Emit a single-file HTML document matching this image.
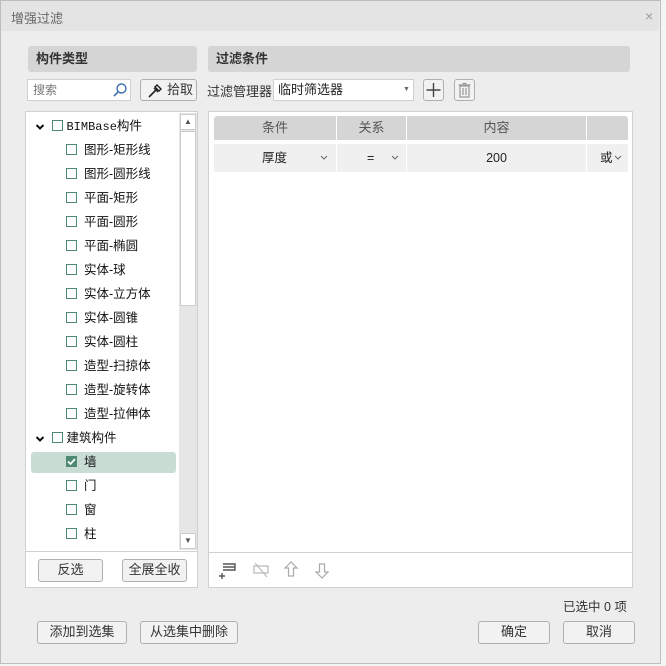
<!DOCTYPE html>
<html><head><meta charset="utf-8"><style>
*{box-sizing:border-box;margin:0;padding:0}
body{width:666px;height:666px;background:#f4f4f4;font-family:"Liberation Sans","Noto Sans CJK SC",sans-serif;font-size:12px;color:#222;position:relative;overflow:hidden}
.a{position:absolute}
.win{left:0;top:0;width:661px;height:664px;border:1px solid #bdbdbd;background:#ededed}
.title{left:1px;top:1px;width:658px;height:30px;background:#e4e4e4;color:#666;font-size:13px;padding:7px 0 0 10px}
.hdr{background:#d5d5d5;border-radius:3px;font-weight:bold;font-size:13px;color:#333;padding:0 0 0 8px;height:26px;line-height:26px}
.box{background:#fff;border:1px solid #d0d0d0}
.btn{background:#f2f2f2;border:1px solid #b0b0b0;border-radius:3px;text-align:center;font-size:13px;color:#333;line-height:20px}
.cb{width:11px;height:11px;border:1.5px solid #4e8a72;display:inline-block}
.row{position:absolute;left:0;height:24px;font-size:12.5px;color:#111;line-height:24px;white-space:nowrap}
.th{position:absolute;top:0;height:24px;background:#d5d5d5;text-align:center;line-height:24px;color:#555;font-size:13px}
.td{position:absolute;top:28px;height:28px;background:#f0f0f0;line-height:28px;font-size:12.5px}
.chev{position:absolute;top:11px}
</style></head><body>
<div class="a win"></div>
<div class="a title">增强过滤</div>
<div class="a" style="left:645px;top:8px;color:#999;font-size:14px">×</div>

<div class="a hdr" style="left:28px;top:46px;width:169px">构件类型</div>
<div class="a hdr" style="left:208px;top:46px;width:422px">过滤条件</div>

<div class="a box" style="left:27px;top:79px;width:104px;height:22px;color:#777;padding-left:5px;line-height:20px">搜索
<svg class="a" style="left:84px;top:2px" width="16" height="16"><circle cx="9.5" cy="6.5" r="4.5" fill="none" stroke="#3d6fb0" stroke-width="1.4"/><line x1="6.3" y1="9.7" x2="2" y2="14" stroke="#3d6fb0" stroke-width="1.6"/></svg></div>
<div class="a btn" style="left:140px;top:79px;width:57px;height:22px;text-align:left;padding-left:26px">拾取
<svg class="a" style="left:5px;top:2px" width="17" height="17"><path d="M3 15 L11 7" stroke="#222" stroke-width="1.6"/><path d="M9 5 L11 3 L15 7 L13 9 Z" fill="none" stroke="#222" stroke-width="1.4"/><path d="M8 6L12 10" stroke="#222" stroke-width="1.4"/></svg></div>

<div class="a" style="left:207px;top:81px;font-size:13px;color:#333">过滤管理器</div>
<div class="a box" style="left:273px;top:79px;width:141px;height:22px;padding-left:4px;font-size:13px;line-height:20px">临时筛选器<span class="a" style="left:129px;top:0;font-size:7px;color:#666">▼</span></div>
<div class="a btn" style="left:423px;top:79px;width:21px;height:22px"><svg width="19" height="20"><path d="M9.5 3v14M2.5 10h14" stroke="#444" stroke-width="1.4"/></svg></div>
<div class="a btn" style="left:454px;top:79px;width:21px;height:22px"><svg width="19" height="20"><rect x="5" y="6" width="9" height="11" fill="none" stroke="#999" stroke-width="1.2"/><path d="M3.5 5h12M7.5 3.5h4M8 8v7M11 8v7" stroke="#999" stroke-width="1.2"/></svg></div>

<!-- tree panel -->
<div class="a box" style="left:25px;top:111px;width:173px;height:477px"></div>
<div class="a" style="left:26px;top:551px;width:171px;height:1px;background:#d0d0d0"></div>
<div class="a" style="left:179px;top:113px;width:18px;height:437px;background:#e6e6e6"></div>
<div class="a" style="left:180px;top:114px;width:16px;height:16px;background:#fff;border:1px solid #ccc;font-size:8px;text-align:center;line-height:14px;color:#555">▲</div>
<div class="a" style="left:180px;top:131px;width:16px;height:175px;background:#fff;border:1px solid #ccc"></div>
<div class="a" style="left:180px;top:533px;width:16px;height:16px;background:#fff;border:1px solid #ccc;font-size:8px;text-align:center;line-height:14px;color:#555">▼</div>
<div class="a" style="left:31px;top:452px;width:145px;height:21px;background:#c9ddd5;border-radius:3px"></div>
<svg class="a" style="left:35px;top:122px" width="10" height="10"><path d="M1.5 3l3.5 3.5 3.5-3.5" stroke="#111" stroke-width="2" fill="none"/></svg>
<svg class="a" style="left:35px;top:434px" width="10" height="10"><path d="M1.5 3l3.5 3.5 3.5-3.5" stroke="#111" stroke-width="2" fill="none"/></svg>
<div class="a" style="left:26px;top:114px;width:150px;height:436px">
<div class="row" style="top:0;left:26px"><span class="cb" style="vertical-align:-1px"></span>&nbsp;<span style="font-family:'Liberation Mono',monospace;font-size:12px">BIMBase</span>构件</div>
<div class="row" style="top:24px;left:40px"><span class="cb" style="vertical-align:-1px"></span>&nbsp; 图形-矩形线</div>
<div class="row" style="top:48px;left:40px"><span class="cb" style="vertical-align:-1px"></span>&nbsp; 图形-圆形线</div>
<div class="row" style="top:72px;left:40px"><span class="cb" style="vertical-align:-1px"></span>&nbsp; 平面-矩形</div>
<div class="row" style="top:96px;left:40px"><span class="cb" style="vertical-align:-1px"></span>&nbsp; 平面-圆形</div>
<div class="row" style="top:120px;left:40px"><span class="cb" style="vertical-align:-1px"></span>&nbsp; 平面-椭圆</div>
<div class="row" style="top:144px;left:40px"><span class="cb" style="vertical-align:-1px"></span>&nbsp; 实体-球</div>
<div class="row" style="top:168px;left:40px"><span class="cb" style="vertical-align:-1px"></span>&nbsp; 实体-立方体</div>
<div class="row" style="top:192px;left:40px"><span class="cb" style="vertical-align:-1px"></span>&nbsp; 实体-圆锥</div>
<div class="row" style="top:216px;left:40px"><span class="cb" style="vertical-align:-1px"></span>&nbsp; 实体-圆柱</div>
<div class="row" style="top:240px;left:40px"><span class="cb" style="vertical-align:-1px"></span>&nbsp; 造型-扫掠体</div>
<div class="row" style="top:264px;left:40px"><span class="cb" style="vertical-align:-1px"></span>&nbsp; 造型-旋转体</div>
<div class="row" style="top:288px;left:40px"><span class="cb" style="vertical-align:-1px"></span>&nbsp; 造型-拉伸体</div>
<div class="row" style="top:312px;left:26px"><span class="cb" style="vertical-align:-1px"></span>&nbsp;建筑构件</div>
<div class="row" style="top:336px;left:40px"><svg width="11" height="11" style="vertical-align:-1px"><rect width="11" height="11" fill="#4e8a72"/><path d="M2 5.5l2.5 2.5 4.5-5" stroke="#fff" stroke-width="1.8" fill="none"/></svg>&nbsp; 墙</div>
<div class="row" style="top:360px;left:40px"><span class="cb" style="vertical-align:-1px"></span>&nbsp; 门</div>
<div class="row" style="top:384px;left:40px"><span class="cb" style="vertical-align:-1px"></span>&nbsp; 窗</div>
<div class="row" style="top:408px;left:40px"><span class="cb" style="vertical-align:-1px"></span>&nbsp; 柱</div>
</div>
<div class="a btn" style="left:38px;top:559px;width:65px;height:23px">反选</div>
<div class="a btn" style="left:122px;top:559px;width:65px;height:23px">全展全收</div>

<!-- right panel -->
<div class="a box" style="left:208px;top:111px;width:425px;height:477px"></div>
<div class="a" style="left:209px;top:552px;width:423px;height:1px;background:#d0d0d0"></div>
<div class="a" style="left:214px;top:116px;width:414px;height:60px">
<div class="th" style="left:0;width:122px;border-top-left-radius:3px">条件</div>
<div class="th" style="left:123px;width:69px">关系</div>
<div class="th" style="left:193px;width:179px">内容</div>
<div class="th" style="left:373px;width:41px;border-top-right-radius:3px"></div>
<div class="td" style="left:0;width:122px;padding-left:48px">厚度<svg class="chev" style="left:106px" width="8" height="6"><path d="M1 1l3 3 3-3" stroke="#666" fill="none"/></svg></div>
<div class="td" style="left:123px;width:69px;padding-left:30px">=<svg class="chev" style="left:54px" width="8" height="6"><path d="M1 1l3 3 3-3" stroke="#666" fill="none"/></svg></div>
<div class="td" style="left:193px;width:179px;text-align:center">200</div>
<div class="td" style="left:373px;width:41px;padding-left:13px">或<svg class="chev" style="left:27px" width="8" height="6"><path d="M1 1l3 3 3-3" stroke="#666" fill="none"/></svg></div>
</div>
<svg class="a" style="left:218px;top:560px" width="120" height="20">
<path d="M5 4h12v6h-12M5 7h12M4 13v6M1 16h6" stroke="#555" stroke-width="1.4" fill="none"/>
<path d="M36 6h14v7h-14zM37 3l12 14" stroke="#bbb" stroke-width="1.3" fill="none"/>
<path d="M73 2l-6 6h3.5v8h5v-8h3.5z" stroke="#aaa" stroke-width="1.2" fill="none"/>
<path d="M104 18l-6-6h3.5v-8h5v8h3.5z" stroke="#aaa" stroke-width="1.2" fill="none"/>
</svg>

<div class="a" style="left:563px;top:596px;font-size:12.5px;color:#333">已选中 0 项</div>
<div class="a btn" style="left:37px;top:621px;width:90px;height:23px">添加到选集</div>
<div class="a btn" style="left:140px;top:621px;width:98px;height:23px">从选集中删除</div>
<div class="a btn" style="left:478px;top:621px;width:72px;height:23px">确定</div>
<div class="a btn" style="left:563px;top:621px;width:72px;height:23px">取消</div>
</body></html>
